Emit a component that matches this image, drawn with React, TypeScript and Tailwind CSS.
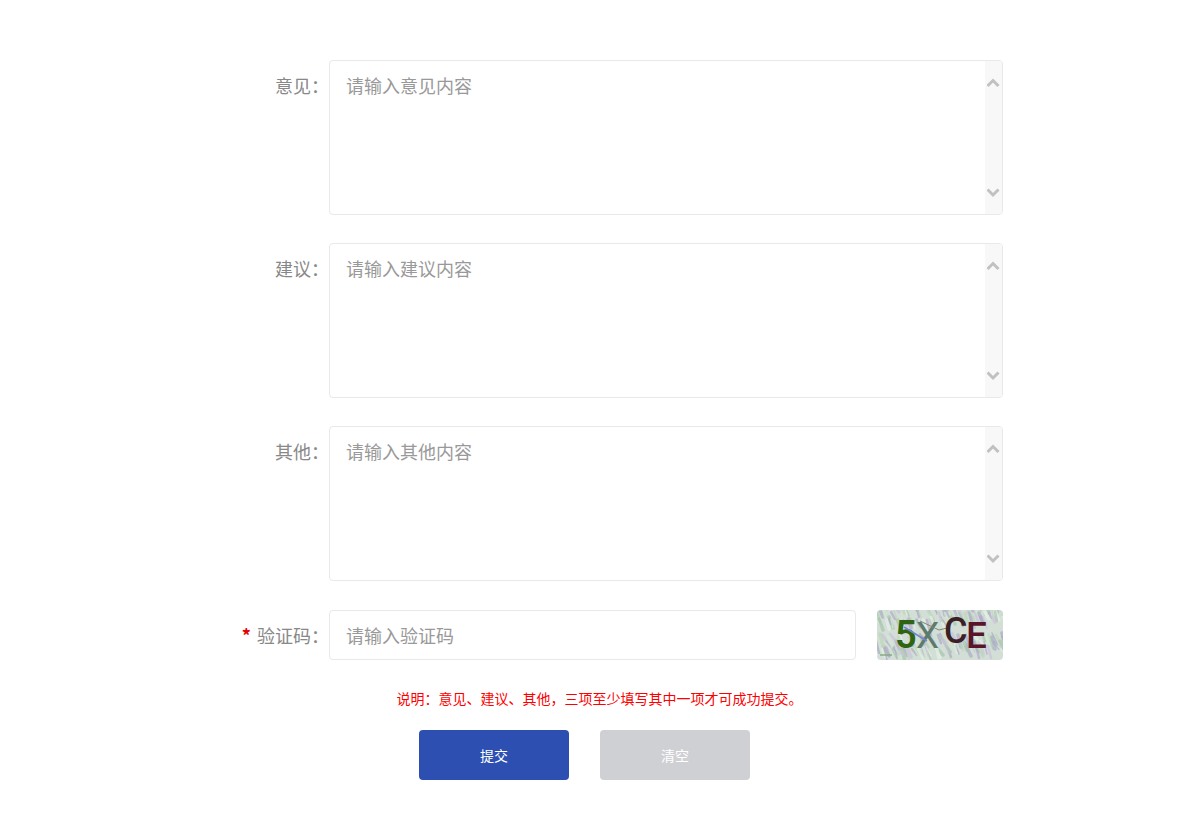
import { useState } from 'react';
import type { FormEvent } from 'react';

const FIELDS = [
  { id: 'opinion', label: '意见', placeholder: '请输入意见内容' },
  { id: 'suggestion', label: '建议', placeholder: '请输入建议内容' },
  { id: 'other', label: '其他', placeholder: '请输入其他内容' },
];

const EMPTY: Record<string, string> = { opinion: '', suggestion: '', other: '', code: '' };

const SPECKS = ['#b3abcb', '#bcd8ba', '#e6f0e8', '#a9adc0', '#d3e8d2', '#cbc3da', '#a9c6ac'];

function ScrollRail() {
  return (
    <div className="pointer-events-none absolute inset-y-px right-px flex w-[17px] flex-col items-center justify-between rounded-r-[3px] bg-[#f8f8f8] py-4">
      <svg width="13" height="11" viewBox="0 0 13 11" fill="none" stroke="#c1c1c1" strokeWidth="3">
        <path d="M0.5 9 6 3.5 11.5 9" />
      </svg>
      <svg width="13" height="11" viewBox="0 0 13 11" fill="none" stroke="#c1c1c1" strokeWidth="3">
        <path d="M0.5 2.5 6 8 11.5 2.5" />
      </svg>
    </div>
  );
}

function Captcha() {
  // slanted flecks behind the characters
  const flecks = Array.from({ length: 200 }, (_, i) => {
    const x = ((i * 47) % 134) - 4;
    const y = ((i * 29 + ((i * i) % 17)) % 58) - 6;
    const len = 5 + ((i * 7) % 8);
    return (
      <path
        key={i}
        d={`M${x} ${y}l${2 + (i % 4)} ${len}`}
        stroke={SPECKS[(i * 5 + (i % 3)) % SPECKS.length]}
        strokeWidth={1.5 + (i % 3)}
        strokeLinecap="round"
        opacity="0.7"
      />
    );
  });

  return (
    <svg viewBox="0 0 126 50" className="h-[50px] w-[126px] font-['Roboto',sans-serif]" role="img" aria-label="验证码图片">
      <rect width="126" height="50" fill="#d2ded6" />
      <g className="blur-[0.6px]">{flecks}</g>
      <path d="M3 45h12" stroke="#86ad80" strokeWidth="1.5" />
      <text x="18" y="38" fontSize="38" fontWeight="600" fill="#2f6512">5</text>
      <text x="39" y="38" fontSize="37" fontWeight="400" fill="#5e7a6c">X</text>
      <path d="M27 17 50 31" stroke="#7286cd" strokeWidth="1.5" />
      <path d="M43 11 62 20 70 18" stroke="#7c8a66" strokeWidth="1" fill="none" />
      <text x="67" y="33" fontSize="36" fontWeight="500" fill="#3c2028">C</text>
      <text x="89" y="38" fontSize="37" fontWeight="500" fill="#591629">E</text>
    </svg>
  );
}

export default function App() {
  const [values, setValues] = useState(EMPTY);

  const update = (id: string, value: string) => setValues((prev) => ({ ...prev, [id]: value }));

  const handleSubmit = (e: FormEvent) => {
    e.preventDefault();
  };

  return (
    <form
      onSubmit={handleSubmit}
      className="mx-auto w-full max-w-[807px] py-[60px] font-['Noto_Sans_CJK_SC',sans-serif] text-lg text-[#888]"
    >
      <div className="flex flex-col gap-7">
        {FIELDS.map((f) => (
          <div key={f.id} className="flex items-start">
            <label htmlFor={f.id} className="w-[133px] shrink-0 pt-[11px] text-right">
              {f.label}：
            </label>
            <div className="relative flex-1">
              <textarea
                id={f.id}
                value={values[f.id]}
                onChange={(e) => update(f.id, e.target.value)}
                placeholder={f.placeholder}
                className="block h-[155px] w-full resize-none overflow-hidden rounded border border-[#e9e9e9] bg-white py-2.5 pr-8 pl-4 outline-none placeholder:text-[#999]"
              />
              <ScrollRail />
            </div>
          </div>
        ))}
      </div>

      <div className="mt-[29px] flex items-center">
        <label htmlFor="code" className="w-[133px] shrink-0 text-right">
          <span className="mr-0.5 font-bold text-[#e60000]">*</span> 验证码：
        </label>
        <input
          id="code"
          type="text"
          value={values.code}
          onChange={(e) => update('code', e.target.value)}
          placeholder="请输入验证码"
          className="h-[50px] min-w-0 flex-1 rounded border border-[#e9e9e9] bg-white px-4 outline-none placeholder:text-[#999]"
        />
        <button type="button" aria-label="换一张" className="ml-[21px] shrink-0 overflow-hidden rounded">
          <Captcha />
        </button>
      </div>

      <p className="mt-[27px] mb-[21px] text-center text-sm leading-[22px] text-[#f00]">
        说明：意见、建议、其他，三项至少填写其中一项才可成功提交。
      </p>

      <div className="flex justify-center gap-[31px] pr-[30px] text-sm text-white">
        <button type="submit" className="h-[50px] w-[150px] rounded bg-[#2c4fb1]">
          提交
        </button>
        <button type="button" onClick={() => setValues(EMPTY)} className="h-[50px] w-[150px] rounded bg-[#cfd0d4]">
          清空
        </button>
      </div>
    </form>
  );
}
